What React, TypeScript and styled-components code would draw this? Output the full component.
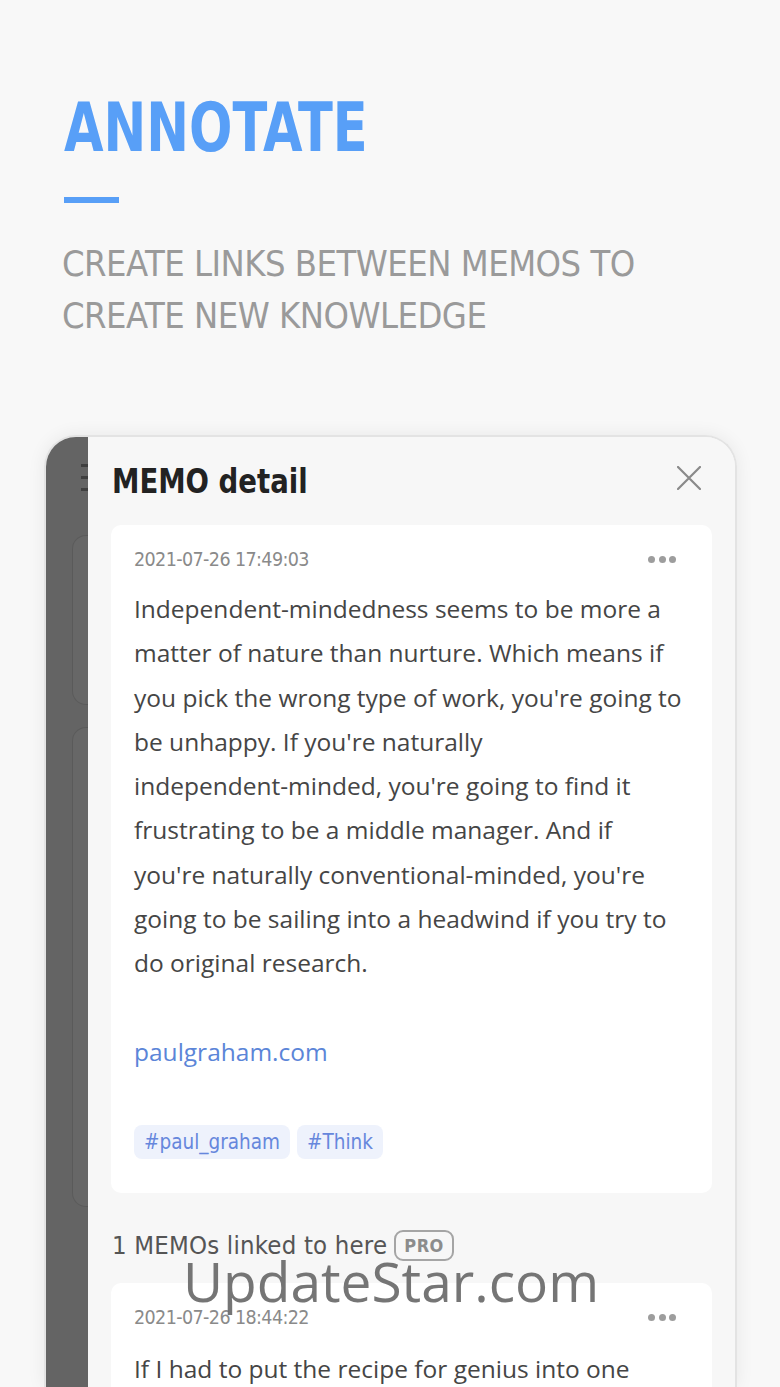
import React from "react";
import styled, { createGlobalStyle } from "styled-components";

const Global = createGlobalStyle`
  html, body { margin: 0; padding: 0; background: #f8f8f8; }
  body { height: 1387px; overflow: hidden; }
  * { box-sizing: border-box; }
`;

const NARROW = `"DejaVu Sans Condensed", "DejaVu Sans", Roboto, sans-serif`;
const BODY = `"Open Sans", "Noto Sans", sans-serif`;

const Page = styled.div`
  width: 780px;
  height: 1387px;
  overflow: hidden;
  background: #f8f8f8;
  display: flex;
  flex-direction: column;
`;

const Hero = styled.header`
  flex: none;
  padding: 93px 0 0 62px;
  display: flex;
  flex-direction: column;
  align-items: flex-start;
`;

const Title = styled.h1`
  margin: 0 0 0 2px;
  font-family: ${NARROW};
  font-weight: 700;
  font-size: 68px;
  line-height: 70px;
  color: #589ff7;
  transform: scaleX(0.835);
  transform-origin: left center;
  white-space: nowrap;
`;

const Bar = styled.div`
  width: 55px;
  height: 6px;
  margin: 34px 0 0 2px;
  background: #589ff7;
`;

const Subtitle = styled.p`
  margin: 35px 0 0 0;
  font-family: ${NARROW};
  font-weight: 400;
  font-size: 36px;
  line-height: 52px;
  letter-spacing: -0.5px;
  color: #9a9a9a;
  white-space: nowrap;
`;

const Frame = styled.section`
  margin: 93px 0 0 44px;
  width: 693px;
  flex: 1;
  min-height: 0;
  display: flex;
  border: 2px solid #e3e3e3;
  border-bottom: none;
  border-radius: 32px 32px 0 0;
  overflow: hidden;
  box-shadow: 0 0 18px rgba(0, 0, 0, 0.07);
`;

const Strip = styled.aside`
  width: 42px;
  flex: none;
  background: #646464;
  overflow: hidden;
  display: flex;
  flex-direction: column;
  padding: 27px 0 0 35px;
`;

const MenuLine = styled.div`
  width: 18px;
  height: 3px;
  flex: none;
  background: #404040;
  margin-bottom: 9px;
`;

const GhostCard = styled.div<{ $h: number; $top: number }>`
  width: 80px;
  height: ${(p) => p.$h}px;
  margin: ${(p) => p.$top}px 0 0 -9px;
  flex: none;
  border-radius: 14px 0 0 14px;
  border: 1px solid rgba(0, 0, 0, 0.12);
  background: rgba(255, 255, 255, 0.025);
`;

const Panel = styled.div`
  flex: 1;
  background: #f7f7f7;
  padding: 0 23px;
  display: flex;
  flex-direction: column;
  & > * { flex: none; }
`;

const PanelHeader = styled.div`
  height: 88px;
  display: flex;
  align-items: center;
  justify-content: space-between;
  padding: 0 0 0 1px;
`;

const PanelTitle = styled.h2`
  margin: 0;
  font-family: ${NARROW};
  font-weight: 700;
  font-size: 34px;
  color: #222;
  transform: scaleX(0.9);
  transform-origin: left center;
  white-space: nowrap;
`;

const CloseBtn = styled.button`
  border: none;
  background: none;
  padding: 0;
  margin: 0 10px 6px 0;
  width: 26px;
  height: 26px;
  display: flex;
  align-items: center;
  justify-content: center;
`;

const Card = styled.article<{ $pb?: number }>`
  background: #ffffff;
  border-radius: 10px;
  padding: 22px 23px ${(p) => p.$pb ?? 34}px 23px;
  display: flex;
  flex-direction: column;
`;

const CardTop = styled.div`
  height: 24px;
  display: flex;
  align-items: center;
  justify-content: space-between;
`;

const DateText = styled.span`
  font-family: ${NARROW};
  font-size: 19.5px;
  letter-spacing: -0.6px;
  color: #8a8a8a;
`;

const Dots = styled.span`
  display: flex;
  gap: 3.5px;
  margin-right: 13px;
`;

const Dot = styled.i`
  width: 7px;
  height: 7px;
  border-radius: 50%;
  background: #9d9d9d;
`;

const BodyText = styled.div<{ $mt?: number }>`
  margin-top: ${(p) => p.$mt ?? 16}px;
  font-family: ${BODY};
  font-size: 24.5px;
  line-height: 44.3px;
  color: #454545;
  white-space: nowrap;
`;

const Line = styled.div`
  height: 44.3px;
`;

const LinkLine = styled.a`
  display: block;
  color: #5b85d8;
  text-decoration: none;
`;

const Tags = styled.div`
  margin-top: 51px;
  display: flex;
  gap: 7px;
`;

const Tag = styled.span`
  height: 34px;
  padding: 0 10px;
  display: flex;
  align-items: center;
  border-radius: 8px;
  background: #eef2fc;
  font-family: ${NARROW};
  font-size: 20.5px;
  color: #6687dc;
`;

const LinkedRow = styled.div`
  margin: 36px 0 22px 1px;
  height: 32px;
  display: flex;
  align-items: center;
  gap: 7px;
  font-family: ${NARROW};
  font-size: 25.5px;
  letter-spacing: 0.2px;
  color: #555;
`;

const ProBadge = styled.span`
  height: 31px;
  padding: 0 8px;
  display: flex;
  align-items: center;
  border: 2px solid #a5a5a5;
  border-radius: 9px;
  font-family: ${NARROW};
  font-weight: 700;
  font-size: 18px;
  letter-spacing: 0.5px;
  color: #8c8c8c;
`;

const Watermark = styled.div`
  position: absolute;
  left: 183px;
  top: 1243px;
  font-family: "Open Sans", "Noto Sans", sans-serif;
  font-size: 55px;
  line-height: 76px;
  color: rgba(105, 105, 105, 0.92);
  pointer-events: none;
  white-space: nowrap;
`;

const Root = styled.div`
  position: relative;
`;

const body1 = [
  "Independent-mindedness seems to be more a",
  "matter of nature than nurture. Which means if",
  "you pick the wrong type of work, you're going to",
  "be unhappy. If you're naturally",
  "independent-minded, you're going to find it",
  "frustrating to be a middle manager. And if",
  "you're naturally conventional-minded, you're",
  "going to be sailing into a headwind if you try to",
  "do original research.",
];

function More() {
  return (
    <Dots>
      <Dot />
      <Dot />
      <Dot />
    </Dots>
  );
}

export default function App() {
  return (
    <Root>
      <Global />
      <Page>
        <Hero>
          <Title>ANNOTATE</Title>
          <Bar />
          <Subtitle>
            CREATE LINKS BETWEEN MEMOS TO
            <br />
            CREATE NEW KNOWLEDGE
          </Subtitle>
        </Hero>
        <Frame>
          <Strip>
            <MenuLine />
            <MenuLine />
            <MenuLine />
            <GhostCard $h={170} $top={35} />
            <GhostCard $h={480} $top={22} />
          </Strip>
          <Panel>
            <PanelHeader>
              <PanelTitle>MEMO detail</PanelTitle>
              <CloseBtn aria-label="close">
                <svg width="24" height="24" viewBox="0 0 24 24">
                  <path d="M1 1L23 23M23 1L1 23" stroke="#8a8a8a" strokeWidth="2.2" strokeLinecap="round" />
                </svg>
              </CloseBtn>
            </PanelHeader>
            <Card>
              <CardTop>
                <DateText>2021-07-26 17:49:03</DateText>
                <More />
              </CardTop>
              <BodyText>
                {body1.map((l) => (
                  <Line key={l}>{l}</Line>
                ))}
                <Line />
                <LinkLine href="#">paulgraham.com</LinkLine>
              </BodyText>
              <Tags>
                <Tag>#paul_graham</Tag>
                <Tag>#Think</Tag>
              </Tags>
            </Card>
            <LinkedRow>
              1 MEMOs linked to here
              <ProBadge>PRO</ProBadge>
            </LinkedRow>
            <Card>
              <CardTop>
                <DateText>2021-07-26 18:44:22</DateText>
                <More />
              </CardTop>
              <BodyText $mt={18}>
                <Line>If I had to put the recipe for genius into one</Line>
                <Line>sentence, that might be it: to have a</Line>
              </BodyText>
            </Card>
          </Panel>
        </Frame>
      </Page>
      <Watermark>UpdateStar.com</Watermark>
    </Root>
  );
}
